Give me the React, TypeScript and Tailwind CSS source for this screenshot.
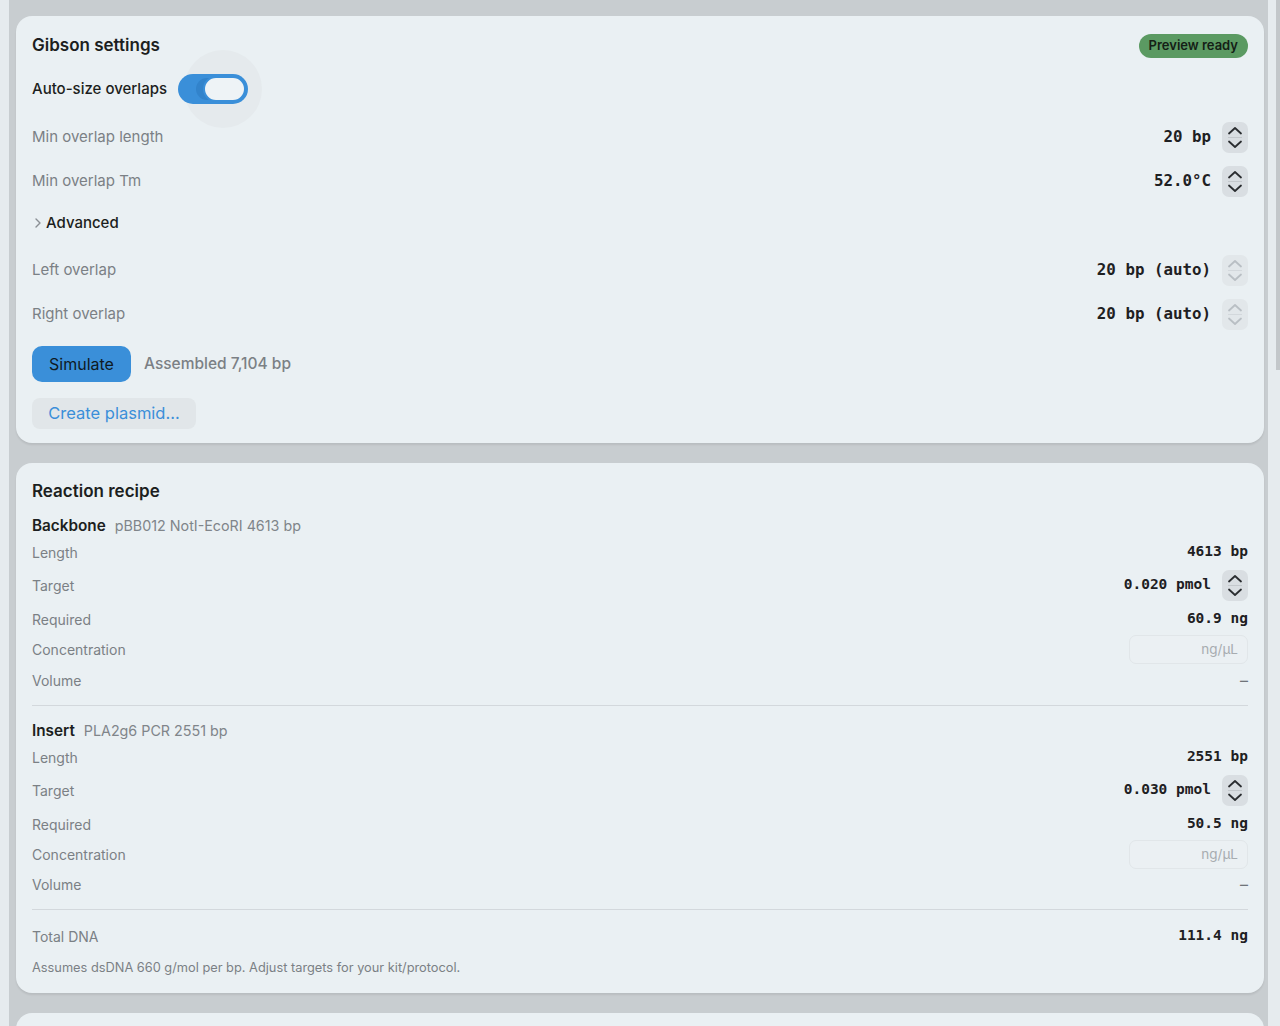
import React from "react";

const mono = "font-['DejaVu_Sans_Mono',monospace]";

function Stepper({ disabled = false }: { disabled?: boolean }) {
  const stroke = disabled ? "#b9bfc4" : "#2a2d30";
  return (
    <div
      className={`w-[26px] h-[31px] rounded-[7px] flex items-center justify-center ${
        disabled ? "bg-[#e2e7ea]" : "bg-[#d9dee2]"
      }`}
    >
      <svg width="20" height="27" viewBox="0 0 20 27" fill="none">
        <path d="M4 9.5 L10 4 L16 9.5" stroke={stroke} strokeWidth="1.8" strokeLinecap="round" strokeLinejoin="round" />
        <line x1="3" y1="13.5" x2="17" y2="13.5" stroke={disabled ? "#d3d8dc" : "#c3c8cc"} strokeWidth="1" />
        <path d="M4 17.5 L10 23 L16 17.5" stroke={stroke} strokeWidth="1.8" strokeLinecap="round" strokeLinejoin="round" />
      </svg>
    </div>
  );
}

function SettingRow({
  label,
  value,
  disabled = false,
  className = "",
}: {
  label: string;
  value: string;
  disabled?: boolean;
  className?: string;
}) {
  return (
    <div className={`flex items-center justify-between h-[44px] ${className}`}>
      <span className="text-[15px] text-[#7b8085]">{label}</span>
      <div className="flex items-center gap-[11px]">
        <span className={`${mono} text-[15.8px] font-semibold text-[#1e2022]`}>{value}</span>
        <Stepper disabled={disabled} />
      </div>
    </div>
  );
}

type Part = {
  kind: string;
  desc: string;
  length: string;
  target: string;
  required: string;
};

function RecipeRow({
  label,
  h,
  children,
}: {
  label: string;
  h: string;
  children?: React.ReactNode;
}) {
  return (
    <div className={`flex items-center justify-between ${h}`}>
      <span className="text-[14px] text-[#7b8085]">{label}</span>
      {children}
    </div>
  );
}

function PartBlock({ part, volH, top }: { part: Part; volH: string; top: string }) {
  const val = `${mono} text-[14.5px] font-semibold text-[#1e2022]`;
  return (
    <div className={top}>
      <div className="flex items-center h-[20px] gap-[9px]">
        <span className="text-[15.3px] font-semibold text-[#1c1e20]">{part.kind}</span>
        <span className="text-[14.3px] text-[#80858a]">{part.desc}</span>
      </div>
      <div className="mt-[3px]">
        <RecipeRow label="Length" h="h-[26px]">
          <span className={val}>{part.length}</span>
        </RecipeRow>
        <RecipeRow label="Target" h="h-[38px] mt-[1px]">
          <div className="flex items-center gap-[11px]">
            <span className={val}>{part.target}</span>
            <Stepper />
          </div>
        </RecipeRow>
        <RecipeRow label="Required" h="h-[30px]">
          <span className={val}>{part.required}</span>
        </RecipeRow>
        <RecipeRow label="Concentration" h="h-[30px]">
          <div className="w-[119px] h-[29px] rounded-[7px] border border-[#e1e6e9] bg-[#ebf0f3] flex items-center justify-end pr-[9px]">
            <span className="text-[13.5px] text-[#a7acb0]">ng/µL</span>
          </div>
        </RecipeRow>
        <RecipeRow label="Volume" h={volH}>
          <span className="text-[16px] text-[#6f7479]">–</span>
        </RecipeRow>
      </div>
    </div>
  );
}

export default function App() {
  const backbone: Part = {
    kind: "Backbone",
    desc: "pBB012 NotI-EcoRI 4613 bp",
    length: "4613 bp",
    target: "0.020 pmol",
    required: "60.9 ng",
  };
  const insert: Part = {
    kind: "Insert",
    desc: "PLA2g6 PCR 2551 bp",
    length: "2551 bp",
    target: "0.030 pmol",
    required: "50.5 ng",
  };

  return (
    <div className="h-[1026px] w-[1280px] overflow-hidden bg-[#e6ebee] flex font-['Inter',sans-serif] relative">
      {/* scroll thumb */}
      <div className="absolute right-0 top-0 w-[4px] h-[370px] bg-[#c3c7ca]" />
      <div className="ml-[9px] w-[1259px] bg-[#c8cdd0] pl-[7px] pr-[4px] pt-[16px] flex flex-col gap-[20px]">
        {/* Gibson settings */}
        <div className="bg-[#eaf0f3] rounded-[16px] px-[16px] pt-[17px] pb-[14px] shadow-[0_2px_2px_rgba(0,0,0,0.08)]">
          <div className="flex items-center justify-between h-[26px]">
            <h2 className="text-[17px] font-semibold text-[#1c1e20]">Gibson settings</h2>
            <span className="h-[24px] px-[10px] rounded-full bg-[#5b9a62] text-[#142016] text-[13px] font-semibold flex items-center">
              Preview ready
            </span>
          </div>

          <div className="flex items-center h-[44px] mt-[8px] gap-[11px]">
            <span className="text-[15px] font-medium text-[#1c1e20]">Auto-size overlaps</span>
            <div className="relative">
              <div className="absolute left-[6px] top-[-24px] w-[78px] h-[78px] rounded-full bg-[#e5eaed]" />
              <div className="relative w-[70px] h-[30px] rounded-full bg-[#3a8fd9] flex items-center justify-end pr-[2px]">
                <div className="absolute left-[18px] top-[4px] w-[14px] h-[22px] rounded-l-full bg-[#3283cb]" />
                <div className="relative w-[43px] h-[26px] rounded-full bg-[#eef3f6] border-2 border-[#3a8fd9]" />
              </div>
            </div>
          </div>

          <SettingRow label="Min overlap length" value="20 bp" className="mt-[4px]" />
          <SettingRow label="Min overlap Tm" value="52.0°C" />

          <div className="flex items-center h-[40px] gap-[3px]">
            <svg width="10" height="12" viewBox="0 0 10 12" className="ml-[1px]">
              <path d="M3 2 L7 6 L3 10" stroke="#8a8f94" strokeWidth="1.4" fill="none" strokeLinecap="round" strokeLinejoin="round" />
            </svg>
            <span className="text-[15px] font-medium text-[#1c1e20]">Advanced</span>
          </div>

          <SettingRow label="Left overlap" value="20 bp (auto)" disabled className="mt-[5px]" />
          <SettingRow label="Right overlap" value="20 bp (auto)" disabled />

          <div className="flex items-center mt-[10px] gap-[13px]">
            <button className="h-[36px] w-[99px] rounded-[10px] bg-[#3a8fd9] text-[16px] text-[#0f1a24]">
              Simulate
            </button>
            <span className="text-[15.5px] text-[#7b8085] font-medium">Assembled 7,104 bp</span>
          </div>

          <button className="mt-[16px] h-[31px] w-[164px] rounded-[8px] bg-[#e1e6e9] text-[16.5px] text-[#3a8fd9]">
            Create plasmid...
          </button>
        </div>

        {/* Reaction recipe */}
        <div className="bg-[#eaf0f3] rounded-[16px] px-[16px] pt-[18px] pb-[16px] shadow-[0_2px_2px_rgba(0,0,0,0.08)]">
          <h2 className="text-[17px] font-semibold text-[#1c1e20] h-[22px] flex items-center">Reaction recipe</h2>

          <PartBlock part={backbone} volH="h-[32px]" top="mt-[13px]" />
          <div className="mt-[9px] h-px bg-[#d3d8dc]" />
          <PartBlock part={insert} volH="h-[30px]" top="mt-[15px]" />
          <div className="mt-[10px] h-px bg-[#d3d8dc]" />

          <div className="flex items-center justify-between h-[30px] mt-[11px]">
            <span className="text-[14px] text-[#7b8085]">Total DNA</span>
            <span className={`${mono} text-[14.5px] font-semibold text-[#1e2022]`}>111.4 ng</span>
          </div>
          <p className="mt-[8px] h-[18px] flex items-center text-[12.8px] text-[#7b8085]">
            Assumes dsDNA 660 g/mol per bp. Adjust targets for your kit/protocol.
          </p>
        </div>

        {/* next card (cut off) */}
        <div className="bg-[#eaf0f3] rounded-t-[16px] h-[40px] shrink-0" />
      </div>
    </div>
  );
}
